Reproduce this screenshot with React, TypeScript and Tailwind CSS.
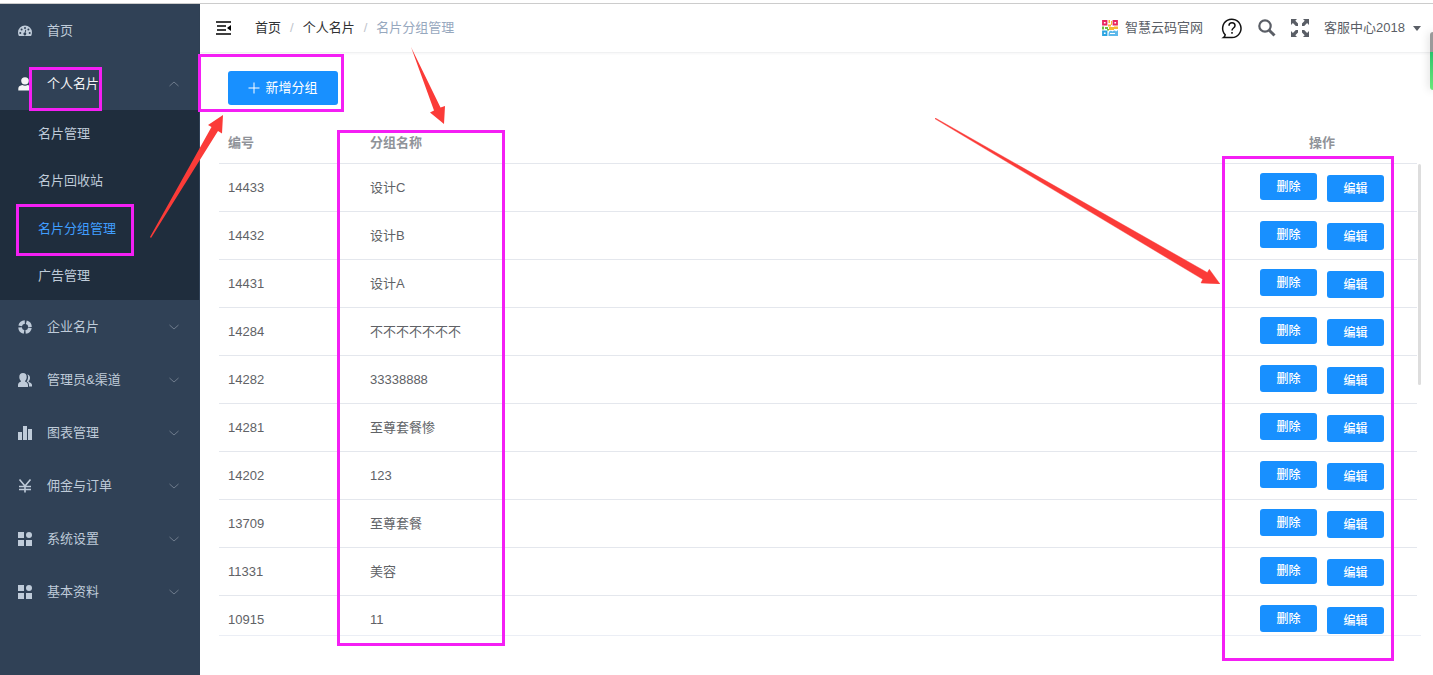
import type { ReactNode } from "react";

const Gauge = () => (
  <svg className="w-[14px] h-[14px]" viewBox="0 0 14 14" fill="currentColor">
    <path
      fillRule="evenodd"
      d="M7 1.5a7 7 0 0 0-7 7c0 1.3.3 2.5.9 3.5h12.2c.6-1 .9-2.200.9-3.500a7 7 0 0 0-7-7zM2.300 7.900a1 1 0 1 1 0 2 1 1 0 0 1 0-2zM3.600 4.600a1 1 0 1 1 0 2 1 1 0 0 1 0-2zM7 3a1 1 0 1 1 0 2 1 1 0 0 1 0-2zM10.400 4.600a1 1 0 1 1 0 2 1 1 0 0 1 0-2zM11.700 7.900a1 1 0 1 1 0 2 1 1 0 0 1 0-2zM7.300 5.800l.9.200-.6 2.700a1.400 1.400 0 1 1-.9-.200z"
    />
  </svg>
);

const User = () => (
  <svg className="w-[14px] h-[14px]" viewBox="0 0 14 14" fill="currentColor">
    <ellipse cx="7" cy="3.800" rx="3.800" ry="3.600" />
    <path d="M0.300 13.500V11.500C.3 9.500 2.500 8.400 4.200 8.100c1.700 1 3.900 1 5.600 0 1.700.3 3.900 1.400 3.900 3.400v2z" />
  </svg>
);

const Ring = () => (
  <svg className="w-[14px] h-[14px]" viewBox="0 0 14 14" fill="none" stroke="currentColor" strokeWidth="3.600">
    <circle cx="7" cy="7" r="5" strokeDasharray="6.250 1.600" strokeDashoffset="-.800" />
  </svg>
);

const Users = () => (
  <svg className="w-[14px] h-[14px]" viewBox="0 0 14 14" fill="currentColor">
    <path d="M5 0C2.600 0 1.300 1.700 1.300 3.900c0 1.600.6 3.100 1.700 4v.7C1.500 9.300 0 10.100 0 12v2h10v-2c0-1.900-1.500-2.700-3-3.400v-.7c1.100-.9 1.700-2.400 1.700-4C8.700 1.700 7.400 0 5 0z" />
    <path d="M9 1.500c1.900 0 3 1.300 3 3.200 0 1.400-.5 2.700-1.300 3.400v.8c1.900.6 3.300 1.500 3.300 3.200V13.500h-3V12c0-1.900-1.100-2.900-2.400-3.600 1-1.200 1.500-2.900 1.500-4.700 0-.8-.3-1.600-1.100-2.200z" />
  </svg>
);

const Bars = () => (
  <svg className="w-[14px] h-[14px]" viewBox="0 0 14 14" fill="currentColor">
    <path d="M0 6h4v8H0zM5 0h4v14H5zM10 3h4v11h-4z" />
  </svg>
);

const Yen = () => (
  <svg className="w-[14px] h-[14px]" viewBox="0 0 14 14" fill="none" stroke="currentColor" strokeWidth="1.600">
    <path d="M1.500 .5L7 7L12.500 .5M7 7v6.500M1 7.500h12M1 10.500h12" />
  </svg>
);

const Blocks = () => (
  <svg className="w-[14px] h-[14px]" viewBox="0 0 14 14" fill="currentColor">
    <path d="M0 0h6v6H0zM0 8h6v6H0zM8 8h6v6H8z" />
    <circle cx="11" cy="3" r="3" />
  </svg>
);

const Chevron = ({ up = false }: { up?: boolean }) => (
  <svg className="w-[10px] h-[6px] text-[#6f7c8c]" viewBox="0 0 10 6" fill="none" stroke="currentColor">
    <path d={up ? "M.5 5L5 1L9.500 5" : "M.5 1L5 5L9.500 1"} />
  </svg>
);

const subMenu = [
  { name: "名片管理" },
  { name: "名片回收站" },
  { name: "名片分组管理", active: true },
  { name: "广告管理" },
];

const menu = [
  { name: "企业名片", icon: <Ring /> },
  { name: "管理员&渠道", icon: <Users /> },
  { name: "图表管理", icon: <Bars /> },
  { name: "佣金与订单", icon: <Yen /> },
  { name: "系统设置", icon: <Blocks /> },
  { name: "基本资料", icon: <Blocks /> },
];

const groups = [
  { id: 14433, name: "设计C" },
  { id: 14432, name: "设计B" },
  { id: 14431, name: "设计A" },
  { id: 14284, name: "不不不不不不不" },
  { id: 14282, name: "33338888" },
  { id: 14281, name: "至尊套餐惨" },
  { id: 14202, name: "123" },
  { id: 13709, name: "至尊套餐" },
  { id: 11331, name: "美容" },
  { id: 10915, name: "11" },
];

const MenuItem = ({ icon, name, open, plain }: { icon: ReactNode; name: string; open?: boolean; plain?: boolean }) => (
  <a
    href="#"
    className={`flex items-center h-[53px] pl-[18px] pr-[21px] ${open ? "text-[#f4f4f5]" : "text-[#bfcbd9]"}`}
  >
    {icon}
    <span className="ml-[15px] flex-1">{name}</span>
    {!plain && <Chevron up={open} />}
  </a>
);

const Sidebar = () => (
  <nav className="w-[200px] shrink-0 bg-[#304156]">
    <MenuItem icon={<Gauge />} name="首页" plain />
    <MenuItem icon={<User />} name="个人名片" open />
    <div className="flex flex-col h-[190px] mr-px bg-[#1f2d3d]">
      {subMenu.map((item) => (
        <a
          key={item.name}
          href="#"
          className={`flex flex-1 items-center pl-[38px] ${item.active ? "text-[#409eff]" : "text-[#bfcbd9]"}`}
        >
          {item.name}
        </a>
      ))}
    </div>
    {menu.map((item) => (
      <MenuItem key={item.name} icon={item.icon} name={item.name} />
    ))}
  </nav>
);

const QrLogo = () => (
  <svg className="w-4 h-4" viewBox="0 0 16 16" fill="none">
    <path d="M1 1h3.500v3.500H1z" stroke="#e8265f" strokeWidth="1.800" />
    <path d="M11.500 1H15v3.500h-3.500z" stroke="#e8265f" strokeWidth="1.800" />
    <path d="M1 11.500h3.500V15H1z" stroke="#2ba4e0" strokeWidth="1.800" />
    <path d="M6.500 0h1.500v3H6.500zM9 1h1v4H9zM6 4.500h3v2H6zM7 7h5v3H7z" fill="#f7b733" />
    <path d="M0 6.500h2v3H0zM3 7h3v2H3zM5 9h2v1.500H5z" fill="#6cbf3f" />
    <path d="M12 6.500h4v2.500h-4z" fill="#f7b733" />
    <path d="M7 12c1-2 3-1.500 3.500-.5 1.500-1.500 3-1 3.500 0L16 10v6H6.500v-2z" fill="#5db8ea" />
    <path d="M8 13.500h5" stroke="#fff" />
  </svg>
);

const Navbar = () => (
  <header className="flex items-center h-[49px] pl-4 pr-3 border-b border-[#f0f1f2] shadow-[0_1px_2px_rgba(0,21,41,0.04)]">
    <button aria-label="收起菜单">
      <svg className="w-4 h-[14px]" viewBox="0 0 16 14" fill="none" stroke="#000" strokeWidth="1.300">
        <path d="M0 1h15M1 5h9M1 9h9M0 13h15" />
        <path d="M15 4v6l-4-3z" fill="#000" stroke="none" />
      </svg>
    </button>
    <ol className="flex flex-1 ml-[23px] text-[#303133]">
      <li><a href="#">首页</a></li>
      <li className="mx-[9px] text-[#c0c4cc]">/</li>
      <li><a href="#">个人名片</a></li>
      <li className="mx-[9px] text-[#c0c4cc]">/</li>
      <li className="text-[#97a8be]">名片分组管理</li>
    </ol>
    <div className="flex items-center text-[#5a5e66]">
      <a href="#" className="flex items-center gap-[7px]">
        <QrLogo />
        智慧云码官网
      </a>
      <button aria-label="帮助" className="ml-[18px]">
        <svg className="w-[22px] h-[22px]" viewBox="0 0 22 22" fill="none" stroke="#111" strokeWidth="1.500">
          <path d="M4.200 17.800A9.200 9.200 0 1 1 11 20.600H2.500C3.300 20 4 19 4.200 17.800z" />
          <path d="M8 8.700C8 4.800 14 4.800 14 8.700c0 2.300-3 2.400-3 4.800M11 15v1.700" />
        </svg>
      </button>
      <button aria-label="搜索" className="ml-[15px]">
        <svg className="w-[18px] h-[18px]" viewBox="0 0 18 18" fill="none" stroke="currentColor">
          <circle cx="7" cy="7" r="5.700" strokeWidth="2.200" />
          <path d="M11.200 11.200L16.500 16.500" strokeWidth="3" />
        </svg>
      </button>
      <button aria-label="全屏" className="ml-[15px]">
        <svg className="w-[18px] h-[18px]" viewBox="0 0 18 18" fill="currentColor">
          <path d="M0 0h6L4.300 1.700 7 4.400V7H4.800L1.900 4.100 0 6zM18 0h-6l1.700 1.700L11 4.400V7h2.200l2.900-2.900L18 6zM0 18h6l-1.700-1.700L7 13.600V11H4.800l-2.900 2.900L0 12zM18 18h-6l1.700-1.700-2.700-2.700V11h2.200l2.900 2.900L18 12z" />
        </svg>
      </button>
      <button className="flex items-center gap-2 ml-[15px]">
        客服中心2018
        <svg className="w-2 h-[5px]" viewBox="0 0 8 5" fill="currentColor">
          <path d="M0 0h8L4 5z" />
        </svg>
      </button>
    </div>
  </header>
);

const GroupTable = () => (
  <div className="relative mt-[17px] mr-3 ml-[19px] border-b border-[#ebeef5]">
    <div className="max-h-[calc(100vh-162px)] overflow-y-auto [scrollbar-width:none] pr-1">
      <table className="w-full table-fixed border-separate border-spacing-0 text-left text-[#606266]">
        <thead className="text-[#909399]">
          <tr className="h-[42px]">
            <th className="w-[142px] px-[9px] border-b border-[#e4e7ed]">编号</th>
            <th className="px-[9px] border-b border-[#e4e7ed]">分组名称</th>
            <th className="w-[190px] px-[9px] border-b border-[#e4e7ed] text-center">操作</th>
          </tr>
        </thead>
        <tbody>
          {groups.map((group) => (
            <tr key={group.id} className="h-12">
              <td className="px-[9px] border-b border-[#e4e7ed]">{group.id}</td>
              <td className="px-[9px] border-b border-[#e4e7ed]">{group.name}</td>
              <td className="border-b border-[#e4e7ed]">
                <div className="flex justify-center gap-[10px] text-xs font-medium text-white">
                  <button className="w-[57px] h-[27px] mb-0.5 rounded-[3px] bg-[#1890ff]">删除</button>
                  <button className="w-[57px] h-[27px] mt-0.5 rounded-[3px] bg-[#1890ff]">编辑</button>
                </div>
              </td>
            </tr>
          ))}
        </tbody>
      </table>
    </div>
    <div className="absolute top-[42px] right-0 w-[3px] h-[221px] rounded-sm bg-[#dddddd]" />
  </div>
);

// Hand-drawn guide marks that lie over the page
const Marks = () => (
  <div className="absolute inset-0 pointer-events-none overflow-hidden">
    <div className="absolute left-[29px] top-[67px] w-[73px] h-[44px] border-3 border-[#f41ff4]" />
    <div className="absolute left-[16px] top-[204px] w-[118px] h-[52px] border-3 border-[#f41ff4]" />
    <div className="absolute left-[198px] top-[54px] w-[146px] h-[58px] border-3 border-[#f41ff4]" />
    <div className="absolute left-[337px] top-[130px] w-[168px] h-[516px] border-3 border-[#f41ff4]" />
    <div className="absolute right-[39px] top-[156px] w-[172px] h-[505px] border-3 border-[#f41ff4]" />
    <svg className="absolute left-0 top-0 w-[460px] h-[250px]" viewBox="0 0 460 250" fill="#fb3b38">
      <path d="M150 237L211.500 127L208 125L223 115L222 133.500L218 131L151 238z" />
      <path d="M411 47L440.500 107.500L445 106L444 124L430 112.500L434 110.500z" />
    </svg>
    <svg className="absolute right-[213px] top-[118px] w-[285px] h-[166px]" viewBox="0 0 285 166" fill="#fb3b38">
      <path d="M.3 0L272.300 154.500L274.300 151.300L285 166L266 165L267.700 161.300L0 .8z" stroke="#fb3b38" strokeWidth=".400" />
    </svg>
    <div className="absolute right-0 top-8 w-[3px] h-[58px] rounded-l-sm overflow-hidden shadow-[0_0_8px_rgba(0,0,0,0.25)]">
      <div className="h-5 bg-[#9a9a9a]" />
      <div className="h-[38px] bg-linear-to-b from-[#25c46c] to-[#6be87a]" />
    </div>
  </div>
);

export default function App() {
  return (
    <div className="relative flex flex-col min-h-screen pt-[3px] bg-white text-[13px] leading-5 font-['Liberation_Sans','Noto_Sans_CJK_SC',sans-serif]">
      <div className="flex flex-1 border-t border-[#cccccc]">
        <Sidebar />
        <main className="flex-1 min-w-0">
          <Navbar />
          <button className="flex items-center justify-center gap-[5px] w-[110px] h-[34px] mt-[18px] ml-7 rounded-[3px] bg-[#1890ff] text-white">
            <svg className="w-3 h-3" viewBox="0 0 12 12" fill="none" stroke="currentColor">
              <path d="M6 .5v11M.5 6h11" />
            </svg>
            新增分组
          </button>
          <GroupTable />
        </main>
      </div>
      <Marks />
    </div>
  );
}
